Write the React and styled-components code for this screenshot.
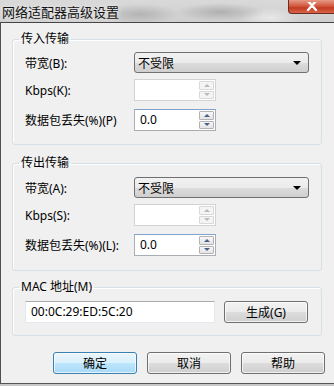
import React from 'react';
import styled, {createGlobalStyle} from 'styled-components';

const GlobalStyle = createGlobalStyle`
    html, body {
        margin: 0;
        padding: 0;
        background: #c4c4c4;
    }
    * {
        box-sizing: border-box;
    }
`

const Window = styled.div`
    width: 334px;
    height: 386px;
    display: flex;
    flex-direction: column;
    font-family: "Noto Sans", "Noto Sans CJK SC", sans-serif;
    font-size: 12px;
    color: #000;
    background: #c8c8c8;
    overflow: hidden;
`

const TitleBar = styled.div`
    height: 22px;
    flex: none;
    display: flex;
    align-items: center;
    justify-content: space-between;
    padding-left: 2px;
    background:
        radial-gradient(ellipse 40px 10px at 140px 14px, rgba(120,120,120,0.35), transparent),
        radial-gradient(ellipse 45px 9px at 220px 12px, rgba(110,110,110,0.35), transparent),
        radial-gradient(ellipse 30px 10px at 270px 18px, rgba(255,255,255,0.5), transparent),
        linear-gradient(to bottom, #d9d9d9, #cfcfcf);
`

const TitleText = styled.span`
    font-size: 13px;
    line-height: 16px;
    margin-top: 1px;
    color: #111;
    text-shadow: 0 0 6px rgba(255,255,255,0.9);
`

const CloseButton = styled.div`
    align-self: flex-start;
    width: 46px;
    height: 14px;
    display: flex;
    align-items: flex-end;
    justify-content: center;
    padding-bottom: 2px;
    border: 1px solid #6b2a22;
    border-top: none;
    border-right: none;
    border-radius: 0 0 0 4px;
    background: linear-gradient(to bottom, #e59a86 0%, #d0533a 50%, #c13a20 60%, #d9664a 100%);
`

const Body = styled.div`
    flex: 1;
    display: flex;
    flex-direction: column;
    background: #f0f0f0;
    border-top: 1px solid #454545;
    border-left: 1px solid #505050;
    border-bottom: 1px solid #555;
    padding: 9px 12px 0 11px;
    margin-bottom: 2px;
`

const Group = styled.fieldset`
    margin: ${p => p.$top || 0}px 0 0 0;
    padding: 0;
    border: 1px solid #d5dfe5;
    border-radius: 3px;
    box-shadow: inset 1px 1px 0 #fff;
`

const Legend = styled.legend`
    margin-left: 6px;
    padding: 0 2px;
    font-size: 12px;
    line-height: 14px;
`

const GroupContent = styled.div`
    display: flex;
    flex-direction: column;
    padding: ${p => p.$pad || '6px 12px 13px 12px'};
`

const Row = styled.div`
    display: flex;
    align-items: center;
    justify-content: ${p => p.$between ? 'space-between' : 'flex-start'};
    margin-top: ${p => p.$gap || 0}px;
`

const Label = styled.span`
    width: 109px;
    flex: none;
    white-space: nowrap;
`

const Combo = styled.div`
    width: 175px;
    height: 21px;
    display: flex;
    align-items: center;
    justify-content: space-between;
    padding: 0 7px 0 3px;
    border: 1px solid #707070;
    border-radius: 3px;
    background: linear-gradient(to bottom, #f2f2f2 0%, #ebebeb 50%, #dddddd 50%, #cfcfcf 100%);
`

const Arrow = styled.span`
    width: 0;
    height: 0;
    border-left: 4px solid transparent;
    border-right: 4px solid transparent;
    border-top: 4px solid #000;
`

const Spin = styled.div`
    width: 82px;
    height: 22px;
    display: flex;
    border: 1px solid ${p => p.$disabled ? '#d3d3d3' : '#abadb3'};
    border-top-color: ${p => p.$disabled ? '#d3d3d3' : '#7da2ce'};
    background: #fff;
`

const SpinText = styled.span`
    flex: 1;
    padding-left: 5px;
    line-height: 20px;
`

const SpinButtons = styled.div`
    width: 16px;
    display: flex;
    flex-direction: column;
    gap: 1px;
    padding: 1px 1px 1px 0;
`

const SpinHalf = styled.div`
    flex: 1;
    display: flex;
    align-items: center;
    justify-content: center;
    border: 1px solid ${p => p.$disabled ? '#d8d8d8' : '#b3b3b3'};
    border-radius: 1px;
    background: ${p => p.$disabled
        ? '#f4f4f4'
        : 'linear-gradient(to bottom, #f7f7f7, #e4e4e4)'};
`

const SpinArrow = styled.span`
    width: 0;
    height: 0;
    border-left: 3px solid transparent;
    border-right: 3px solid transparent;
    ${p => p.$up ? 'border-bottom' : 'border-top'}: 3px solid ${p => p.$disabled ? '#b9b9b9' : '#4b5f86'};
`

const TextBox = styled.div`
    width: 190px;
    height: 22px;
    padding-left: 5px;
    line-height: 20px;
    border: 1px solid #e3e9ef;
    border-top-color: #abadb3;
    background: #fff;
`

const Button = styled.div`
    width: 84px;
    height: 22px;
    display: flex;
    align-items: center;
    justify-content: center;
    border: 1px solid ${p => p.$default ? '#3c7fb1' : '#707070'};
    border-radius: 3px;
    box-shadow: inset 0 0 0 1px rgba(255,255,255,0.7);
    background: ${p => p.$default
        ? 'linear-gradient(to bottom, #eaf6fd 0%, #d9f0fc 50%, #bee6fd 50%, #a7d9f5 100%)'
        : 'linear-gradient(to bottom, #f2f2f2 0%, #ebebeb 50%, #dddddd 50%, #cfcfcf 100%)'};
`

const ButtonBar = styled.div`
    display: flex;
    justify-content: flex-end;
    gap: 10px;
    margin: 16px -3px 0 0;
`

const SpinBox = ({value, disabled}) => (
    <Spin $disabled={disabled}>
        <SpinText>{value}</SpinText>
        <SpinButtons>
            <SpinHalf $disabled={disabled}><SpinArrow $up $disabled={disabled} /></SpinHalf>
            <SpinHalf $disabled={disabled}><SpinArrow $disabled={disabled} /></SpinHalf>
        </SpinButtons>
    </Spin>
)

const TransferGroup = ({title, top, labels, pad}) => (
    <Group $top={top}>
        <Legend>{title}</Legend>
        <GroupContent $pad={pad}>
            <Row>
                <Label>{labels[0]}</Label>
                <Combo>不受限<Arrow /></Combo>
            </Row>
            <Row $gap={6}>
                <Label>{labels[1]}</Label>
                <SpinBox value="" disabled />
            </Row>
            <Row $gap={8}>
                <Label>{labels[2]}</Label>
                <SpinBox value="0.0" />
            </Row>
        </GroupContent>
    </Group>
)

const App = () => {
    return (
        <>
        <GlobalStyle />
        <Window>
            <TitleBar>
                <TitleText>网络适配器高级设置</TitleText>
                <CloseButton>
                    <svg width="12" height="9" viewBox="0 0 12 9">
                        <path d="M2 -1 L10 8 M10 -1 L2 8" stroke="#fff" strokeWidth="2.4" strokeLinecap="round" />
                    </svg>
                </CloseButton>
            </TitleBar>
            <Body>
                <TransferGroup
                    title="传入传输"
                    labels={['带宽(B):', 'Kbps(K):', '数据包丢失(%)(P)']}
                />
                <TransferGroup
                    title="传出传输"
                    top={11}
                    pad="7px 12px 14px 12px"
                    labels={['带宽(A):', 'Kbps(S):', '数据包丢失(%)(L):']}
                />
                <Group $top={9}>
                    <Legend>MAC 地址(M)</Legend>
                    <GroupContent $pad="7px 13px 12px 12px">
                        <Row $between>
                            <TextBox>00:0C:29:ED:5C:20</TextBox>
                            <Button>生成(G)</Button>
                        </Row>
                    </GroupContent>
                </Group>
                <ButtonBar>
                    <Button $default>确定</Button>
                    <Button>取消</Button>
                    <Button>帮助</Button>
                </ButtonBar>
            </Body>
        </Window>
        </>
    )
}

export default App;
